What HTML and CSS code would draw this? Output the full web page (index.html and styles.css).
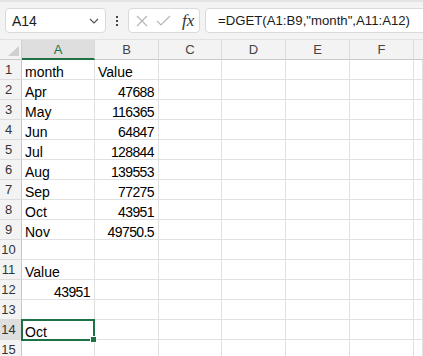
FILE: index.html
```html
<!DOCTYPE html>
<html lang="en">

<head>
    <meta charset="UTF-8">
    <title>DGET</title>
    <link rel="stylesheet" href="styles.css">
</head>

<body>
    <div class="topline"></div>
    <div class="toolbar">
        <div class="namebox">
            <span>A14</span>
            <svg class="chevron" width="10" height="6" viewBox="0 0 10 6">
                <polyline points="1,1 5,5 9,1" fill="none" stroke="#555" stroke-width="1.2" />
            </svg>
        </div>
        <div class="dots"><i></i><i></i><i></i></div>
        <div class="fxbox">
            <svg width="12" height="12" viewBox="0 0 12 12">
                <path d="M1 1 L11 11 M11 1 L1 11" stroke="#b4b4b4" stroke-width="1.1" fill="none" />
            </svg>
            <svg width="15" height="11" viewBox="0 0 15 11">
                <polyline points="1,6 5,10 14,1" stroke="#b4b4b4" stroke-width="1.1" fill="none" />
            </svg>
            <span class="fx">fx</span>
        </div>
        <div class="formula">=DGET(A1:B9,"month",A11:A12)</div>
    </div>

    <div class="sheet">
        <div class="corner"><span class="tri"></span></div>
        <div class="colhead active">A</div>
        <div class="colhead">B</div>
        <div class="colhead">C</div>
        <div class="colhead">D</div>
        <div class="colhead">E</div>
        <div class="colhead">F</div>
        <div class="colhead last"></div>

        <div class="rowhead">1</div><div class="cell">month</div><div class="cell">Value</div><div class="cell"></div><div class="cell"></div><div class="cell"></div><div class="cell"></div><div class="cell"></div>
        <div class="rowhead">2</div><div class="cell">Apr</div><div class="cell num">47688</div><div class="cell"></div><div class="cell"></div><div class="cell"></div><div class="cell"></div><div class="cell"></div>
        <div class="rowhead">3</div><div class="cell">May</div><div class="cell num">116365</div><div class="cell"></div><div class="cell"></div><div class="cell"></div><div class="cell"></div><div class="cell"></div>
        <div class="rowhead">4</div><div class="cell">Jun</div><div class="cell num">64847</div><div class="cell"></div><div class="cell"></div><div class="cell"></div><div class="cell"></div><div class="cell"></div>
        <div class="rowhead">5</div><div class="cell">Jul</div><div class="cell num">128844</div><div class="cell"></div><div class="cell"></div><div class="cell"></div><div class="cell"></div><div class="cell"></div>
        <div class="rowhead">6</div><div class="cell">Aug</div><div class="cell num">139553</div><div class="cell"></div><div class="cell"></div><div class="cell"></div><div class="cell"></div><div class="cell"></div>
        <div class="rowhead">7</div><div class="cell">Sep</div><div class="cell num">77275</div><div class="cell"></div><div class="cell"></div><div class="cell"></div><div class="cell"></div><div class="cell"></div>
        <div class="rowhead">8</div><div class="cell">Oct</div><div class="cell num">43951</div><div class="cell"></div><div class="cell"></div><div class="cell"></div><div class="cell"></div><div class="cell"></div>
        <div class="rowhead">9</div><div class="cell">Nov</div><div class="cell num">49750.5</div><div class="cell"></div><div class="cell"></div><div class="cell"></div><div class="cell"></div><div class="cell"></div>
        <div class="rowhead">10</div><div class="cell"></div><div class="cell"></div><div class="cell"></div><div class="cell"></div><div class="cell"></div><div class="cell"></div><div class="cell"></div>
        <div class="rowhead">11</div><div class="cell">Value</div><div class="cell"></div><div class="cell"></div><div class="cell"></div><div class="cell"></div><div class="cell"></div><div class="cell"></div>
        <div class="rowhead">12</div><div class="cell num">43951</div><div class="cell"></div><div class="cell"></div><div class="cell"></div><div class="cell"></div><div class="cell"></div><div class="cell"></div>
        <div class="rowhead">13</div><div class="cell"></div><div class="cell"></div><div class="cell"></div><div class="cell"></div><div class="cell"></div><div class="cell"></div><div class="cell"></div>
        <div class="rowhead active">14</div><div class="cell selected">Oct<span class="sel"><span class="handle"></span></span></div><div class="cell"></div><div class="cell"></div><div class="cell"></div><div class="cell"></div><div class="cell"></div><div class="cell"></div>
        <div class="rowhead">15</div><div class="cell"></div><div class="cell"></div><div class="cell"></div><div class="cell"></div><div class="cell"></div><div class="cell"></div><div class="cell"></div>
    </div>
</body>

</html>
```

FILE: styles.css
```css
body {
    margin: 0;
    width: 423px;
    height: 356px;
    overflow: hidden;
    background-color: #fff;
    font-family: "Liberation Sans", Arial, sans-serif;
    color: #000;
}

.topline {
    height: 2px;
    background-color: #e4e4e4;
}

.toolbar {
    height: 38px;
    box-sizing: border-box;
    display: flex;
    align-items: center;
    padding-left: 5px;
    background-color: #f3f3f3;
    border-bottom: 1px solid #e2e2e2;
    white-space: nowrap;
    overflow: hidden;
}

.toolbar > * {
    flex-shrink: 0;
}

.namebox,
.fxbox,
.formula {
    height: 25px;
    box-sizing: border-box;
    background-color: #fff;
    border: 1px solid #dadada;
    border-radius: 4px;
    display: flex;
    align-items: center;
}

.namebox {
    width: 101px;
    padding: 0 6px 0 6px;
    justify-content: space-between;
    font-size: 14px;
    color: #1b1b1b;
}

.dots {
    width: 2px;
    margin: 0 10px 0 10px;
    display: flex;
    flex-direction: column;
    gap: 2px;
}

.dots i {
    display: block;
    width: 2px;
    height: 2px;
    background-color: #444;
}

.fxbox {
    width: 72px;
    padding-left: 7px;
    gap: 8px;
}

.fx {
    font-family: "Liberation Serif", "Times New Roman", serif;
    font-style: italic;
    font-size: 17px;
    color: #333;
    margin-left: 3px;
}

.formula {
    margin-left: 5px;
    width: 260px;
    padding-left: 12px;
    font-size: 13.2px;
    color: #1b1b1b;
}

.sheet {
    display: grid;
    grid-template-columns: 22px 73px 64px 63px 64px 64px 64px 1fr;
    grid-auto-rows: 20px;
}

.corner,
.colhead,
.rowhead {
    box-sizing: border-box;
    background-color: #f3f3f3;
    color: #444;
}

.corner {
    position: relative;
    border-right: 1px solid #d2d2d2;
    border-bottom: 1px solid #c8c8c8;
}

.tri {
    position: absolute;
    right: 2px;
    bottom: 3px;
    width: 0;
    height: 0;
    border-left: 11px solid transparent;
    border-bottom: 10px solid #cfcfcf;
}

.colhead {
    text-align: center;
    font-size: 13px;
    line-height: 19px;
    border-right: 1px solid #dcdcdc;
    border-bottom: 1px solid #c8c8c8;
}

.colhead.active {
    background-color: #dedede;
    color: #1e7145;
    border-bottom: 2px solid #1e7145;
}

.colhead.last {
    border-right: none;
}

.rowhead {
    font-size: 13px;
    line-height: 20px;
    padding-right: 4px;
    text-align: center;
    border-right: 1px solid #c8c8c8;
    border-bottom: 1px solid #dcdcdc;
    color: #333;
}

.rowhead.active {
    background-color: #dedede;
}

.cell {
    box-sizing: border-box;
    font-size: 14px;
    line-height: 16px;
    padding: 4px 3px 0 3px;
    border-right: 1px solid #e1e1e1;
    border-bottom: 1px solid #e1e1e1;
    white-space: nowrap;
}

.num {
    text-align: right;
    padding-right: 4px;
    letter-spacing: -0.6px;
}

.selected {
    position: relative;
}

.sel {
    position: absolute;
    left: -1px;
    top: -1px;
    right: -1px;
    bottom: -2px;
    border: 2px solid #1e7145;
}

.handle {
    position: absolute;
    right: -4px;
    bottom: -4px;
    width: 5px;
    height: 5px;
    background-color: #1e7145;
    border: 1px solid #fff;
}
```
